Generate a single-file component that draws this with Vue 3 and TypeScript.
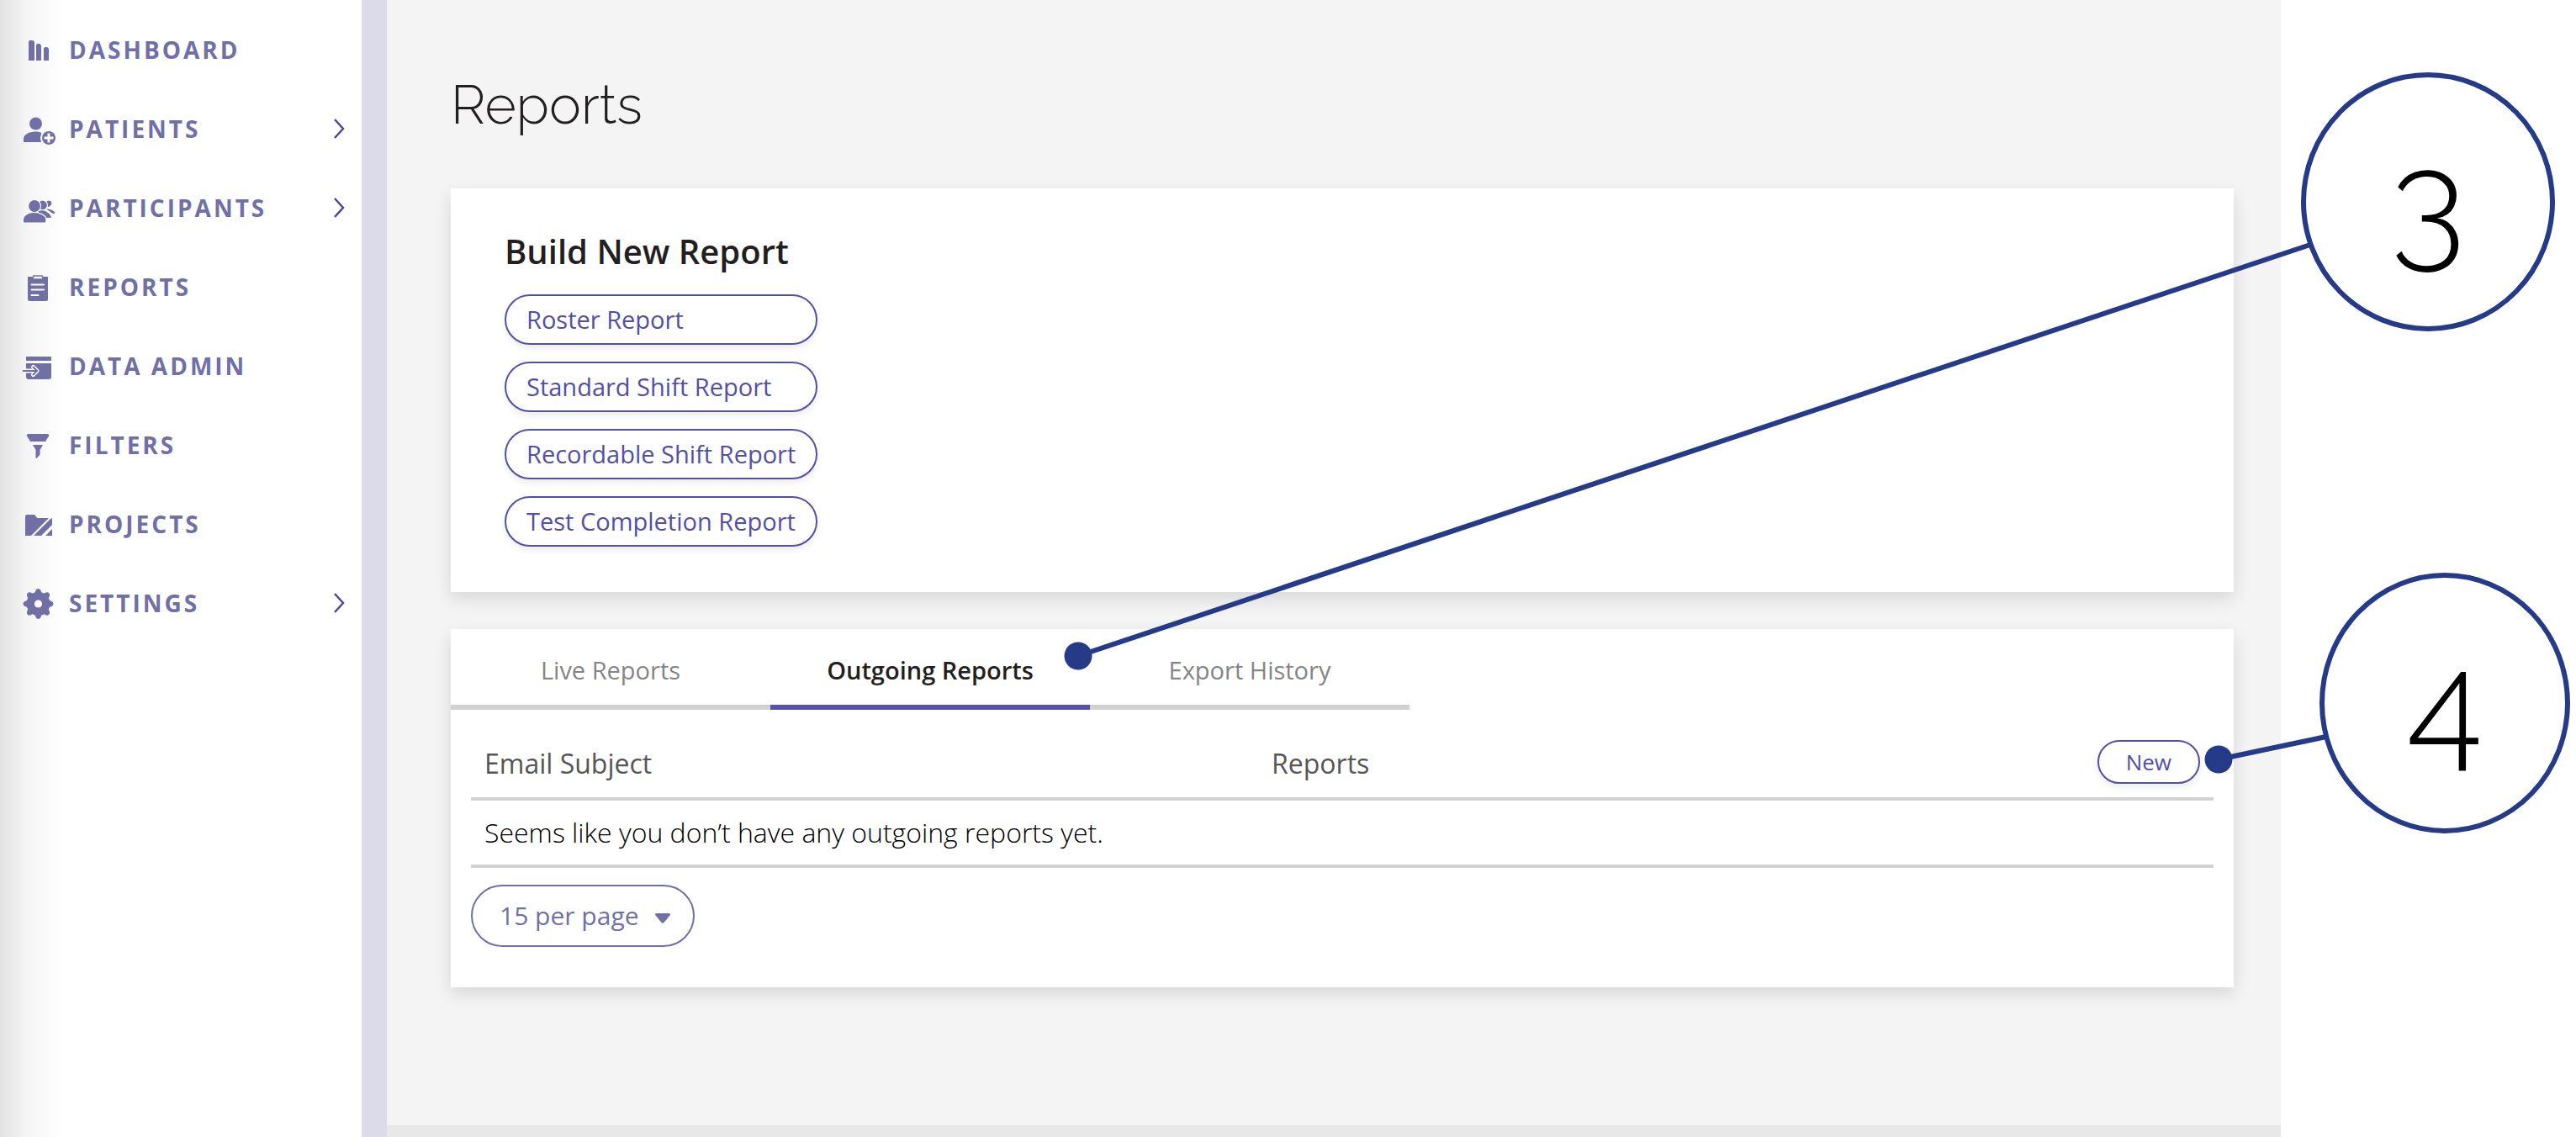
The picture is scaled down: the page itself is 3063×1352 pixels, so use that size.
<script setup lang="ts">
import { ref } from 'vue'

interface NavItem {
  id: string
  label: string
  expandable?: boolean
}

interface Callout {
  label: string
  cx: number
  cy: number
  rx: number
  ry: number
  dotX: number
  dotY: number
  endX: number
  endY: number
}

const navItems: NavItem[] = [
  { id: 'dashboard', label: 'DASHBOARD' },
  { id: 'patients', label: 'PATIENTS', expandable: true },
  { id: 'participants', label: 'PARTICIPANTS', expandable: true },
  { id: 'reports', label: 'REPORTS' },
  { id: 'data-admin', label: 'DATA ADMIN' },
  { id: 'filters', label: 'FILTERS' },
  { id: 'projects', label: 'PROJECTS' },
  { id: 'settings', label: 'SETTINGS', expandable: true },
]

const reportTypes = [
  'Roster Report',
  'Standard Shift Report',
  'Recordable Shift Report',
  'Test Completion Report',
]

const tabs = ['Live Reports', 'Outgoing Reports', 'Export History']
const activeTab = ref('Outgoing Reports')
const pageSize = ref('15')

const callouts: Callout[] = [
  { label: '3', cx: 2887, cy: 240, rx: 148, ry: 151, dotX: 1282, dotY: 780, endX: 2747, endY: 291 },
  { label: '4', cx: 2907, cy: 836, rx: 146, ry: 152, dotX: 2638, dotY: 903, endX: 2766, endY: 876 },
]

const gearTeeth = [0, 45, 90, 135, 180, 225, 270, 315]
</script>

<template>
  <div class="page">
    <aside class="sidebar">
      <nav aria-label="Main">
        <a v-for="item in navItems" :key="item.id" class="nav-item" :href="'#' + item.id">
          <svg class="nav-icon" viewBox="0 0 40 40" fill="currentColor" aria-hidden="true">
            <template v-if="item.id === 'dashboard'">
              <path d="M8 33V11q0-2 2-2h2q3 0 3 3v21zM17 33V15q0-2 2-2h1q3 0 3 3v17zM26 33V19q0-2 2-2h1q3 0 3 3v13z" />
            </template>
            <template v-else-if="item.id === 'patients'">
              <circle cx="16.5" cy="14" r="7.5" />
              <path d="M2 36v-4c0-5 7-8.500 14-8.500 3 0 5 .5 7 1.200V36z" />
              <circle cx="32" cy="31" r="10" fill="#fff" />
              <circle cx="32" cy="31" r="8" />
              <path d="M30.500 25.500h3v4h4v3h-4v4h-3v-4h-4v-3h4z" fill="#fff" />
            </template>
            <template v-else-if="item.id === 'participants'">
              <g stroke="#fff" stroke-width="1.200">
                <path d="M29 12c4-2.500 7.500 0 7 3s-3 4-3 4l-4 1z" />
                <path d="M27 21c6-1 13 2 13.500 6l-4 .5z" />
                <circle cx="24.500" cy="17" r="6" />
                <path d="M18 24c8-3.500 17 1 17.500 8.500H24z" />
                <circle cx="15" cy="18" r="7.500" />
                <path d="M1.400 38v-4c0-5 6-8.500 13-8.500S29 29 29 34c0 3 0 4-1.500 4z" />
              </g>
            </template>
            <template v-else-if="item.id === 'reports'">
              <path d="M7 8h24v27q0 2-2 2H9q-2 0-2-2z" />
              <path d="M14 7h10l1.500 4h-13z" fill="#fff" stroke="currentColor" stroke-width="1.500" />
              <path d="M11.500 17.500H26M11.500 23.500H26M11.500 30h8" stroke="#fff" stroke-width="2" stroke-linecap="round" />
            </template>
            <template v-else-if="item.id === 'data-admin'">
              <path d="M5 9h30v5H5zM5 17h30v16q0 3-3 3H8q-3 0-3-3z" />
              <path d="M5 26h11M13.500 21.500l4.500 4.500-4.500 4.500" fill="none" stroke="#fff" stroke-width="5" stroke-linecap="round" stroke-linejoin="round" />
              <path d="M1 26h16M13 21l5 5-5 5" fill="none" stroke="currentColor" stroke-width="2.200" />
            </template>
            <template v-else-if="item.id === 'filters'">
              <path d="M8 7h22q3 0 2 2.500L28 16H10L6 9.500Q5 7 8 7zM13 20h12l-3.500 6v5.500L17.500 36l-1-.5V26z" />
            </template>
            <template v-else-if="item.id === 'projects'">
              <path d="M6 9h9l3.500 4H32L11 34H4V11q0-2 2-2z" />
              <path d="M34 14l2-1v8L23 34h-9zM36 26v8h-8z" />
            </template>
            <template v-else>
              <circle cx="19.500" cy="21" r="14" />
              <path
                v-for="angle in gearTeeth"
                :key="angle"
                d="M13.500 10q3-3 3-5 1-2 3-2t3 2q0 2 3 5z"
                :transform="`rotate(${angle} 19.500 21)`"
              />
              <circle cx="19.500" cy="21" r="4.600" fill="#fff" />
            </template>
          </svg>
          <span class="nav-label">{{ item.label }}</span>
          <svg v-if="item.expandable" class="chevron" viewBox="0 0 14 24" aria-hidden="true">
            <path d="M1 1l10 11L1 23" fill="none" stroke="currentColor" stroke-width="2.500" />
          </svg>
        </a>
      </nav>
    </aside>

    <main class="content">
      <div class="content-body">
        <h1>Reports</h1>

        <section class="card builder">
          <h2>Build New Report</h2>
          <div class="report-types">
            <button v-for="type in reportTypes" :key="type" type="button" class="pill">{{ type }}</button>
          </div>
        </section>

        <section class="card">
          <div class="tabs" role="tablist">
            <button
              v-for="tab in tabs"
              :key="tab"
              type="button"
              role="tab"
              class="tab"
              :class="{ active: tab === activeTab }"
              :aria-selected="tab === activeTab"
              @click="activeTab = tab"
            >
              {{ tab }}
            </button>
          </div>
          <div class="panel">
            <table>
              <thead>
                <tr>
                  <th class="col-subject" scope="col">Email Subject</th>
                  <th scope="col">Reports</th>
                  <th class="col-action"><button type="button" class="pill pill-small">New</button></th>
                </tr>
              </thead>
              <tbody>
                <tr>
                  <td colspan="3">Seems like you don’t have any outgoing reports yet.</td>
                </tr>
              </tbody>
            </table>
            <div class="page-size">
              <select v-model="pageSize" aria-label="Rows per page">
                <option value="15">15 per page</option>
                <option value="30">30 per page</option>
                <option value="50">50 per page</option>
              </select>
              <svg class="caret" viewBox="0 0 18 12" aria-hidden="true">
                <path d="M2 0h14q3 0 1.500 2.500L10.500 11q-1.500 1.500-3 0L.5 2.500Q-1 0 2 0z" fill="currentColor" />
              </svg>
            </div>
          </div>
        </section>
      </div>
      <footer class="footer-strip"></footer>
    </main>

    <svg class="callouts" viewBox="0 0 3063 1352">
      <g v-for="c in callouts" :key="c.label">
        <line :x1="c.dotX" :y1="c.dotY" :x2="c.endX" :y2="c.endY" />
        <circle class="dot" :cx="c.dotX" :cy="c.dotY" r="16.500" />
        <ellipse :cx="c.cx" :cy="c.cy" :rx="c.rx" :ry="c.ry" />
        <text :x="c.cx" :y="c.cy + 59" text-anchor="middle">{{ c.label }}</text>
      </g>
    </svg>
  </div>
</template>

<style>
body {
  margin: 0;
  background: #fff;
}
</style>

<style scoped>
.page {
  position: relative;
  display: flex;
  min-height: 100vh;
  padding-right: 351px;
  box-sizing: border-box;
  font-family: "Open Sans", "Noto Sans", sans-serif;
  font-size: 29px;
  color: #231f20;
}

.sidebar {
  flex: none;
  box-sizing: border-box;
  width: 460px;
  padding-top: 12px;
  border-right: 30px solid #dcdbe9;
  background: linear-gradient(to right, #e2e2e2, #f5f5f5 32px, #fff 76px);
}

.nav-item {
  display: flex;
  align-items: center;
  height: 94px;
  padding: 0 19px 0 26px;
  color: #706fa6;
  text-decoration: none;
}

.nav-icon {
  flex: none;
  width: 40px;
  height: 40px;
  margin-right: 16px;
}

.nav-label {
  flex: 1;
  font-size: 28px;
  font-weight: 700;
  letter-spacing: 3px;
}

.chevron {
  width: 14px;
  height: 24px;
  color: #4c47a0;
}

.content {
  display: flex;
  flex: 1;
  flex-direction: column;
  min-width: 0;
  background: #f4f4f4;
}

.content-body {
  flex: 1;
  padding: 85px 56px 56px 76px;
}

.footer-strip {
  height: 14px;
  background: #e8e8e8;
}

h1 {
  margin: 0 0 59px;
  font-family: Raleway, Lato, sans-serif;
  font-size: 64px;
  font-weight: 300;
  line-height: 80px;
}

.card {
  margin-bottom: 44px;
  background: #fff;
  box-shadow: 0 8px 20px rgba(0, 0, 0, 0.12);
}

.card:last-child {
  margin-bottom: 0;
}

.builder {
  padding: 47px 64px 54px;
}

h2 {
  margin: 0 0 23px;
  font-size: 40px;
  font-weight: 600;
  line-height: 56px;
}

.report-types {
  display: inline-flex;
  flex-direction: column;
  gap: 20px;
  vertical-align: top;
}

.pill {
  box-sizing: border-box;
  height: 60px;
  padding: 0 24px 2px;
  border: 2px solid #524fa5;
  border-radius: 30px;
  background: #fff;
  box-shadow: 0 4px 8px rgba(0, 0, 0, 0.08);
  color: #524fa5;
  font: inherit;
  text-align: left;
}

.pill-small {
  height: 52px;
  padding: 0 32px;
  font-size: 26px;
}

.tabs {
  display: flex;
}

.tab {
  box-sizing: border-box;
  width: 380px;
  height: 96px;
  padding: 7px 0 0;
  border: 0;
  border-bottom: 6px solid #d1d1d1;
  background: none;
  color: #858585;
  font: inherit;
}

.tab.active {
  border-color: #5552a8;
  color: #231f20;
  font-weight: 600;
}

.panel {
  padding: 20px 24px 48px;
}

table {
  width: 100%;
  border-collapse: separate;
  border-spacing: 0;
  font-size: 32px;
  line-height: 44px;
}

th,
td {
  padding: 16px;
  border-bottom: 4px solid #d1d1d1;
  text-align: left;
}

th {
  padding: 18px 16px 14px;
  color: #565656;
  font-weight: 400;
}

td {
  color: #000;
  font-weight: 300;
}

.col-subject {
  width: 904px;
}

.col-action {
  padding: 16px;
  text-align: right;
  line-height: 0;
}

.page-size {
  position: relative;
  display: inline-block;
  margin-top: 20px;
  color: #706fa6;
  vertical-align: top;
}

select {
  display: block;
  width: 266px;
  height: 74px;
  padding: 0 32px 2px;
  border: 2px solid #706fa6;
  border-radius: 37px;
  appearance: none;
  background: #fff;
  color: inherit;
  font: inherit;
  font-size: 30px;
}

.caret {
  position: absolute;
  top: 34px;
  right: 29px;
  width: 18px;
  height: 12px;
  pointer-events: none;
}

.callouts {
  position: absolute;
  top: 0;
  left: 0;
  width: 100%;
  pointer-events: none;
}

.callouts line,
.callouts ellipse {
  fill: none;
  stroke: #263b87;
  stroke-width: 6px;
}

.callouts .dot {
  fill: #263b87;
}

.callouts text {
  fill: #000;
  font-family: Raleway, Lato, sans-serif;
  font-size: 168px;
  font-weight: 300;
}
</style>
